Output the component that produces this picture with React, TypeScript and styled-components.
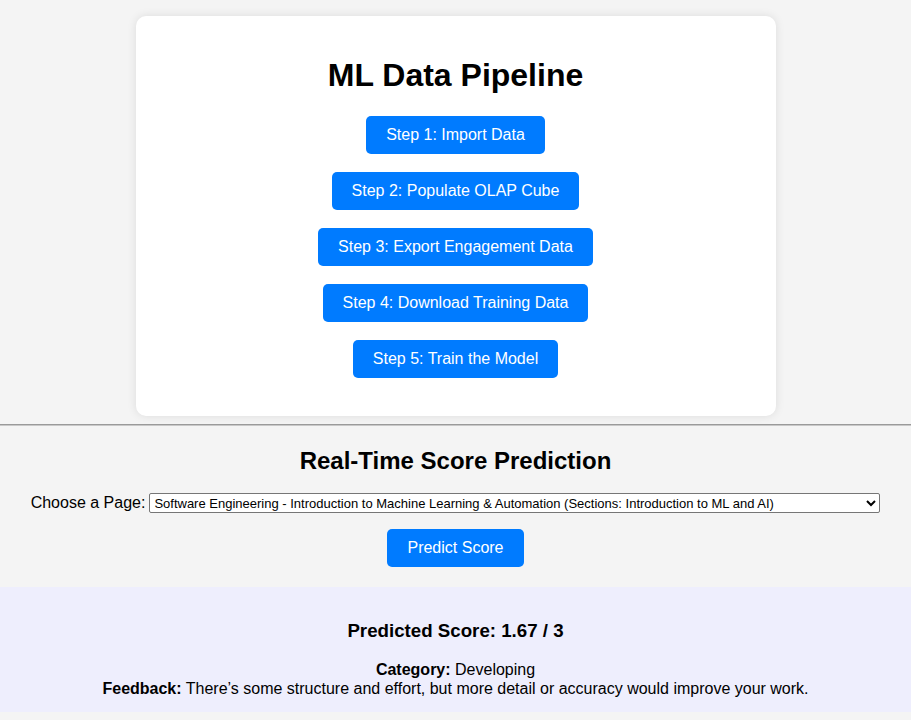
import * as React from 'react';
import styled, { createGlobalStyle } from 'styled-components';

const GlobalStyle = createGlobalStyle`
  body {
    margin: 0;
    background: #f4f4f4;
    font-family: 'Liberation Sans', Arial, sans-serif;
    color: #000;
  }
`

const steps = [
  'Step 1: Import Data',
  'Step 2: Populate OLAP Cube',
  'Step 3: Export Engagement Data',
  'Step 4: Download Training Data',
  'Step 5: Train the Model',
];

const Card = styled.div`
  width: 600px;
  margin: 16px auto 0;
  padding: 20px 20px 38px;
  background: #fff;
  border-radius: 10px;
  box-shadow: 0 0 10px rgba(0, 0, 0, 0.1);
  display: flex;
  flex-direction: column;
  align-items: center;
`

const Title = styled.h1`
  font-size: 32px;
  font-weight: bold;
  margin: 21px 0 22px;
  line-height: 37px;
`

const StepList = styled.div`
  display: flex;
  flex-direction: column;
  align-items: center;
  gap: 18px;
`

const Button = styled.button`
  font-family: 'Liberation Sans', Arial, sans-serif;
  font-size: 16px;
  line-height: 18px;
  padding: 10px 20px;
  background: #007bff;
  color: #fff;
  border: none;
  border-radius: 5px;
  cursor: pointer;
`

const Divider = styled.hr`
  margin: 8px 0 0;
  border: none;
  border-top: 1px solid #9a9a9a;
  border-bottom: 1px solid #c8c8c8;
`

const Prediction = styled.section`
  display: flex;
  flex-direction: column;
  align-items: center;
`

const SubTitle = styled.h2`
  font-size: 24px;
  line-height: 28px;
  margin: 21px 0 18px;
`

const PickRow = styled.div`
  display: flex;
  align-items: center;
  gap: 4px;
  font-size: 16px;
  margin-bottom: 16px;
`

const Select = styled.select`
  width: 731px;
  height: 20px;
  font-family: 'Liberation Sans', Arial, sans-serif;
  font-size: 13px;
  color: #000;
  background: #fff;
  border: 1px solid #767676;
  border-radius: 2px;
  padding: 0;
`

const Result = styled.div`
  margin-top: 20px;
  padding: 15px 20px 14px;
  background: #eeeefd;
  text-align: center;
`

const ScoreHeading = styled.h3`
  font-size: 18.72px;
  line-height: 22px;
  margin: 18px 0 19px;
`

const Detail = styled.p`
  margin: 0;
  font-size: 16px;
  line-height: 18.5px;
`

export default function App() {
  return (
    <>
      <GlobalStyle />
      <Card>
        <Title>ML Data Pipeline</Title>
        <StepList>
          {steps.map((s) => (
            <Button key={s}>{s}</Button>
          ))}
        </StepList>
      </Card>
      <Divider />
      <Prediction>
        <SubTitle>Real-Time Score Prediction</SubTitle>
        <PickRow>
          <label htmlFor="page">Choose a Page:</label>
          <Select id="page" defaultValue="ml">
            <option value="ml">
              Software Engineering - Introduction to Machine Learning &amp; Automation (Sections: Introduction to ML and AI)
            </option>
          </Select>
        </PickRow>
        <Button>Predict Score</Button>
      </Prediction>
      <Result>
        <ScoreHeading>Predicted Score: 1.67 / 3</ScoreHeading>
        <Detail>
          <strong>Category:</strong> Developing
          <br />
          <strong>Feedback:</strong> There’s some structure and effort, but more detail or accuracy would improve your work.
        </Detail>
      </Result>
    </>
  );
}
